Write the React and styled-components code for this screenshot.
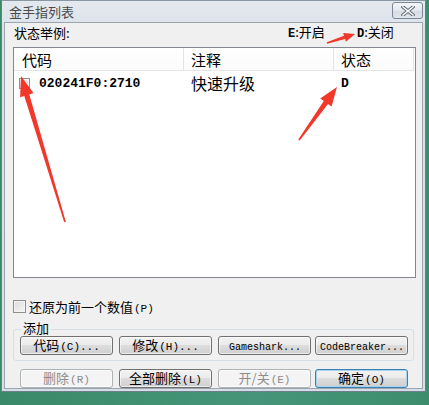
import React from 'react';
import styled, { createGlobalStyle } from 'styled-components';

const GlobalStyle = createGlobalStyle`
  body {
    margin: 0;
    font-family: "Noto Sans CJK SC", "DejaVu Sans", sans-serif;
  }
`;

const CJK = '"Noto Sans CJK SC", "Noto Sans CJK JP", sans-serif';
const MONO = '"Liberation Mono", "DejaVu Sans Mono", monospace';

const Desktop = styled.div`
  position: relative;
  width: 429px;
  height: 405px;
  overflow: hidden;
  background: linear-gradient(90deg, #3a8a68, #46957a 60%, #3d8d6d);
  padding-left: 1px;
  box-sizing: border-box;
`;

const Window = styled.div`
  width: 425px;
  height: 392px;
  box-sizing: border-box;
  border: 1px solid #6f7c89;
  border-top-color: #8b97a3;
  background: linear-gradient(#e4e9ef, #dbe2ea 30px, #d7dee7);
  display: flex;
  flex-direction: column;
`;

const TitleBar = styled.div`
  height: 21px;
  display: flex;
  align-items: center;
  justify-content: space-between;
  padding: 0 2px 0 7px;
  font-family: ${CJK};
  font-size: 13px;
  color: #4a4a4a;
`;

const CloseButton = styled.div`
  width: 29px;
  height: 15px;
  margin-top: -2px;
  border: 1px solid #7b8794;
  border-radius: 3px;
  background: linear-gradient(#f4f6f9, #e3e8ee 50%, #d3dae3 51%, #dfe5ec);
  display: flex;
  align-items: center;
  justify-content: center;
`;

const Client = styled.div`
  flex: 1;
  margin: 0 2px 2px 2px;
  border: 1px solid #9ba5b0;
  background: #f0f0f0;
  padding: 0 8px;
  display: flex;
  flex-direction: column;
  font-family: ${CJK};
  font-size: 13px;
  color: #000;
`;

const StatusRow = styled.div`
  height: 20px;
  display: grid;
  grid-template-columns: 274px 69px auto;
  align-items: center;
  padding-left: 1px;
  line-height: 16px;
`;

const Legend = styled.span`
  white-space: nowrap;
`;

const BoldMono = styled.span`
  font-family: ${MONO};
  font-weight: bold;
  font-size: ${p => p.$size || 12}px;
`;

const ListBox = styled.div`
  margin-top: 4px;
  width: 403px;
  height: 231px;
  box-sizing: border-box;
  border: 1px solid #82878f;
  background: #fff;
`;

const ListGrid = styled.div`
  display: grid;
  grid-template-columns: 170px 150px 80px;
`;

const HeaderCell = styled.div`
  height: 22px;
  display: flex;
  align-items: center;
  padding-left: ${p => p.$pad}px;
  font-size: 15px;
  border-bottom: 1px solid #e5e5e5;
  border-right: 1px solid #e3e3e3;
  background: linear-gradient(#ffffff, #fbfbfb);
`;

const Cell = styled.div`
  height: 24px;
  display: flex;
  align-items: center;
  padding-left: ${p => p.$pad}px;
  font-size: 16px;
  gap: 9px;
`;

const Box = styled.span`
  width: ${p => p.$size}px;
  height: ${p => p.$size}px;
  box-sizing: border-box;
  border: 1px solid #8e8f8f;
  background: linear-gradient(135deg, #dcdcdc, #f6f6f6);
  box-shadow: inset 0 0 0 1px #f4f4f4;
  flex-shrink: 0;
`;

const CheckRow = styled.label`
  margin-top: 21px;
  display: flex;
  align-items: center;
  gap: 3px;
  height: 14px;
`;

const Accel = styled.span`
  font-family: ${MONO};
  font-size: ${p => p.$size || 11}px;
  margin-left: 1px;
`;

const GroupBox = styled.div`
  position: relative;
  margin-top: 16px;
  width: 401px;
  height: 32px;
  box-sizing: border-box;
  border: 1px solid #d5dfe5;
  border-radius: 3px;
  padding: 6px 0 0 6px;
`;

const GroupLabel = styled.span`
  position: absolute;
  top: -10px;
  left: 7px;
  padding: 0 2px;
  background: #f0f0f0;
  font-size: 13px;
  line-height: 16px;
`;

const ButtonRow = styled.div`
  display: grid;
  grid-template-columns: 99px 99px 97px 93px;
  margin-top: ${p => p.$top || 0}px;
  padding-left: ${p => p.$left || 0}px;
`;

const Button = styled.div`
  width: 93px;
  height: 19px;
  box-sizing: border-box;
  border: 1px solid ${p => (p.$disabled ? '#adb2b5' : p.$default ? '#3c7fb1' : '#707070')};
  border-radius: 3px;
  background: ${p =>
    p.$disabled
      ? '#f4f4f4'
      : 'linear-gradient(#f2f2f2, #ebebeb 45%, #dddddd 50%, #cfcfcf)'};
  box-shadow: ${p => (p.$default ? 'inset 0 0 0 1px #a6d2f0' : 'inset 0 0 0 1px rgba(255,255,255,0.6)')};
  color: ${p => (p.$disabled ? '#8d8d8d' : '#000')};
  display: flex;
  align-items: center;
  justify-content: center;
  font-size: 13px;
  line-height: 17px;
  white-space: nowrap;
`;

const Overlay = styled.svg`
  position: absolute;
  left: 0;
  top: 0;
  pointer-events: none;
`;

function arrowPoints(x1, y1, x2, y2, head, headW, tailW, shaftW) {
  const dx = x2 - x1;
  const dy = y2 - y1;
  const len = Math.hypot(dx, dy);
  const ux = dx / len;
  const uy = dy / len;
  const nx = -uy;
  const ny = ux;
  const bx = x2 - ux * head;
  const by = y2 - uy * head;
  const pts = [
    [x1 + nx * tailW, y1 + ny * tailW],
    [bx + nx * shaftW, by + ny * shaftW],
    [bx + nx * headW, by + ny * headW],
    [x2, y2],
    [bx - nx * headW, by - ny * headW],
    [bx - nx * shaftW, by - ny * shaftW],
    [x1 - nx * tailW, y1 - ny * tailW],
  ];
  return pts.map(p => p.map(v => v.toFixed(1)).join(',')).join(' ');
}

function Btn({ cn, accel, disabled, isDefault, mono }) {
  return (
    <Button $disabled={disabled} $default={isDefault}>
      <span>
        {mono ? <Accel $size={10}>{mono}</Accel> : null}
        {cn}
        {accel ? <Accel>{accel}</Accel> : null}
      </span>
    </Button>
  );
}

export default function App() {
  return (
    <Desktop>
      <GlobalStyle />
      <Window>
        <TitleBar>
          <span>金手指列表</span>
          <CloseButton>
            <svg width="14" height="10" viewBox="0 0 14 10">
              <path d="M2 1 L12 9 M12 1 L2 9" stroke="#5b6573" strokeWidth="3.4" strokeLinecap="square" />
              <path d="M2 1 L12 9 M12 1 L2 9" stroke="#fff" strokeWidth="1.6" strokeLinecap="square" />
            </svg>
          </CloseButton>
        </TitleBar>
        <Client>
          <StatusRow>
            <span>状态举例:</span>
            <Legend>
              <BoldMono>E</BoldMono>:开启
            </Legend>
            <Legend>
              <BoldMono>D</BoldMono>:关闭
            </Legend>
          </StatusRow>
          <ListBox>
            <ListGrid>
              <HeaderCell $pad={8}>代码</HeaderCell>
              <HeaderCell $pad={7}>注释</HeaderCell>
              <HeaderCell $pad={7}>状态</HeaderCell>
              <Cell $pad={5}>
                <Box $size={11} />
                <BoldMono $size={13}>020241F0:2710</BoldMono>
              </Cell>
              <Cell $pad={7}>快速升级</Cell>
              <Cell $pad={7}>
                <BoldMono $size={13}>D</BoldMono>
              </Cell>
            </ListGrid>
          </ListBox>
          <CheckRow>
            <Box $size={13} />
            <span>
              还原为前一个数值<Accel>(P)</Accel>
            </span>
          </CheckRow>
          <GroupBox>
            <GroupLabel>添加</GroupLabel>
            <ButtonRow>
              <Btn cn="代码" accel="(C)..." />
              <Btn cn="修改" accel="(H)..." />
              <Btn mono="Gameshark..." />
              <Btn mono="CodeBreaker..." />
            </ButtonRow>
          </GroupBox>
          <ButtonRow $top={8} $left={7}>
            <Btn cn="删除" accel="(R)" disabled />
            <Btn cn="全部删除" accel="(L)" />
            <Btn cn="开/关" accel="(E)" disabled />
            <Btn cn="确定" accel="(O)" isDefault />
          </ButtonRow>
        </Client>
      </Window>
      <Overlay width="429" height="405" viewBox="0 0 429 405">
        <g fill="#f2382a">
          <polygon points={arrowPoints(65, 222, 21, 76, 20, 7, 0.8, 2.6)} />
          <polygon points={arrowPoints(299, 140, 337, 87, 19, 7, 0.8, 2.6)} />
          <polygon points={arrowPoints(327, 43, 355, 34, 11, 4.5, 0.8, 1.8)} />
        </g>
      </Overlay>
    </Desktop>
  );
}
